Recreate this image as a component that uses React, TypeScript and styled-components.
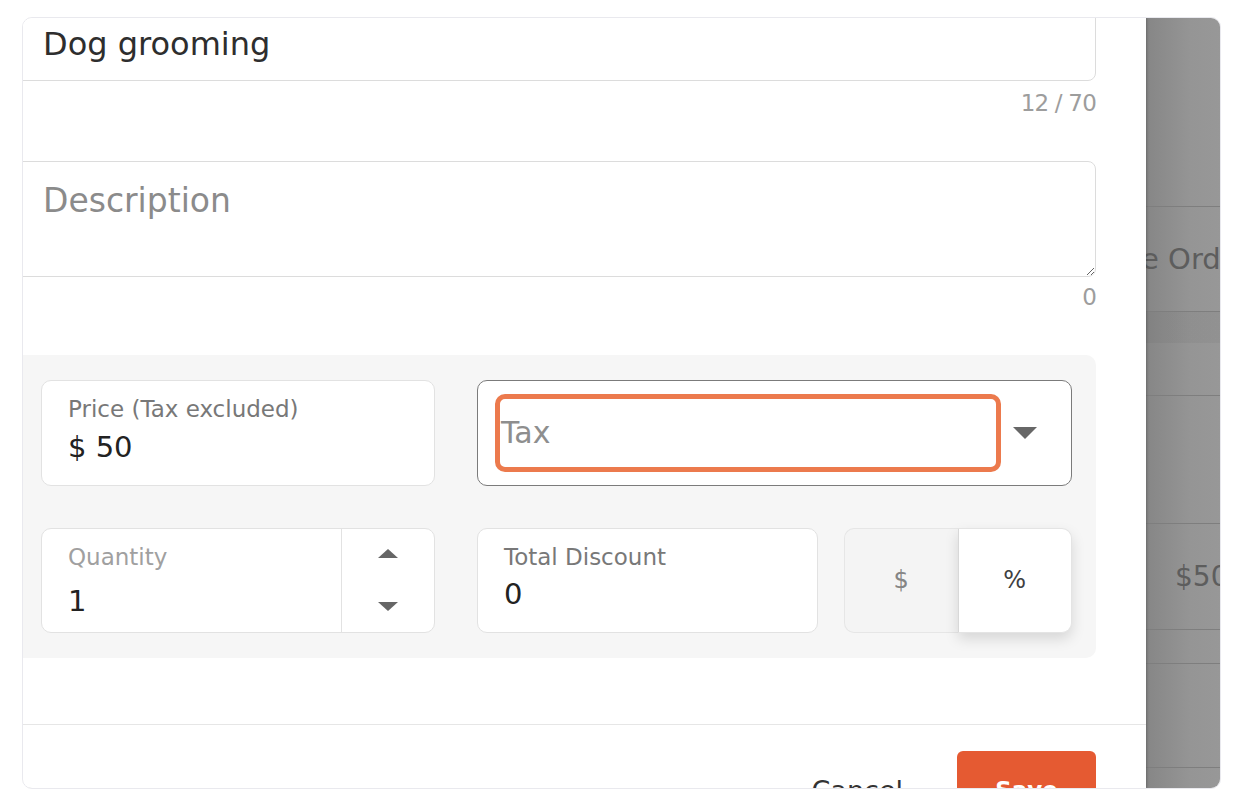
import React from "react";
import styled, { createGlobalStyle } from "styled-components";

const GlobalStyle = createGlobalStyle`
  html, body {
    margin: 0;
    padding: 0;
    background: #ffffff;
  }
  body {
    font-family: "DejaVu Sans", "Noto Sans", sans-serif;
  }
  * {
    box-sizing: border-box;
  }
`;

const Frame = styled.div`
  margin: 17px 0 0 22px;
  width: 1199px;
  height: 772px;
  border: 1.5px solid #e9e9ee;
  border-radius: 10px;
  overflow: hidden;
  display: flex;
  background: #ffffff;
`;

const Modal = styled.div`
  width: 1123px;
  flex-shrink: 0;
  display: flex;
  flex-direction: column;
  background: #ffffff;
  position: relative;
  z-index: 1;
  box-shadow: 1px 0 2px rgba(0, 0, 0, 0.22);
`;

/* content is scrolled: its top-left edge is clipped by the frame */
const Body = styled.div`
  display: flex;
  flex-direction: column;
  margin: -11.5px 50px 0 -11px;
`;

const NameInput = styled.input`
  width: 100%;
  height: 74px;
  border: 1.5px solid #dcdcdc;
  border-radius: 8px;
  padding: 0 30px;
  font-family: inherit;
  font-size: 32px;
  color: #2e2e2e;
  outline: none;
  background: #ffffff;
`;

const Counter = styled.div<{ $top: number }>`
  text-align: right;
  font-size: 23px;
  line-height: 28px;
  letter-spacing: -0.8px;
  color: #9d9d9d;
  margin: ${(p) => p.$top}px 0 44px;
`;

const DescriptionArea = styled.textarea`
  width: 100%;
  height: 116px;
  border: 1.5px solid #dcdcdc;
  border-radius: 8px;
  padding: 22px 30px;
  font-family: inherit;
  font-size: 33px;
  line-height: 33px;
  color: #2b2b2b;
  outline: none;
  display: block;
  background: #ffffff;

  &::placeholder {
    color: #8b8b8b;
  }
`;

const PriceSection = styled.div`
  background: #f6f6f6;
  border-radius: 10px;
  padding: 25px 24px 25px 29px;
  display: flex;
  flex-direction: column;
  gap: 42px;
`;

const FieldRow = styled.div<{ $gap: number }>`
  display: flex;
  gap: ${(p) => p.$gap}px;
`;

const Field = styled.div<{ $width?: number; $height: number }>`
  ${(p) => (p.$width ? `width: ${p.$width}px; flex-shrink: 0;` : "flex: 1;")}
  height: ${(p) => p.$height}px;
  background: #ffffff;
  border: 1.5px solid #e2e2e2;
  border-radius: 10px;
  display: flex;
`;

const FieldBody = styled.div`
  flex: 1;
  display: flex;
  flex-direction: column;
  gap: 7px;
  padding: 15px 26px 0;
`;

const FieldLabel = styled.div<{ $muted?: boolean }>`
  font-size: 23px;
  line-height: 26px;
  color: ${(p) => (p.$muted ? "#a0a0a0" : "#787878")};
  white-space: nowrap;
`;

const FieldValue = styled.div<{ $offset?: number }>`
  font-size: 29px;
  line-height: 34px;
  color: #222222;
  margin-top: ${(p) => p.$offset || 0}px;
`;

const Spinner = styled.div`
  width: 93px;
  border-left: 1.5px solid #e2e2e2;
  display: flex;
  flex-direction: column;
  align-items: center;
  justify-content: space-between;
  padding: 20px 0 21px;
`;

const SelectBox = styled.div`
  flex: 1;
  height: 106px;
  background: #ffffff;
  border: 1.5px solid #7b7b7b;
  border-radius: 10px;
  display: flex;
  align-items: center;
  padding: 0 34px 0 17px;
`;

const Highlight = styled.div`
  flex: 1;
  height: 78px;
  border: 5.5px solid #ec7a4d;
  border-radius: 10px;
  display: flex;
  align-items: center;
  padding-left: 1px;
  font-size: 30px;
  color: #8e8e8e;
`;

const Caret = styled.svg`
  margin-left: 12px;
  flex-shrink: 0;
`;

const DiscountGroup = styled.div`
  flex: 1;
  display: flex;
  gap: 26px;
`;

const Toggle = styled.div`
  width: 228px;
  height: 105px;
  display: flex;
`;

const ToggleOption = styled.div<{ $active?: boolean }>`
  flex: 1;
  display: flex;
  align-items: center;
  justify-content: center;
  font-size: 24px;
  border: 1.5px solid ${(p) => (p.$active ? "#e4e4e4" : "#e6e6e6")};
  ${(p) =>
    p.$active
      ? `
    background: #ffffff;
    color: #3f3f3f;
    border-radius: 0 10px 10px 0;
    border-left-color: #d8d8d8;
    box-shadow: 0 6px 14px rgba(0, 0, 0, 0.13);
  `
      : `
    background: #f4f4f4;
    color: #858585;
    border-right: none;
    border-radius: 10px 0 0 10px;
  `}
`;

const Divider = styled.div`
  height: 1.5px;
  background: #e6e6e6;
  margin-top: 66px;
  flex-shrink: 0;
`;

const Footer = styled.div`
  display: flex;
  justify-content: flex-end;
  align-items: center;
  gap: 54px;
  padding: 26px 50px 0 0;
`;

const CancelButton = styled.button`
  background: none;
  border: none;
  padding: 0;
  font-family: inherit;
  font-size: 27px;
  color: #333333;
`;

const SaveButton = styled.button`
  width: 139px;
  height: 78px;
  border: none;
  border-radius: 6px;
  background: #e55a32;
  color: #ffffff;
  font-family: inherit;
  font-size: 23px;
  font-weight: bold;
`;

const Backdrop = styled.div`
  flex: 1;
  display: flex;
  flex-direction: column;
  background: linear-gradient(90deg, #868686 0%, #959595 35%, #9c9c9c 100%);
`;

const BackdropRow = styled.div<{ $h?: number; $band?: boolean }>`
  ${(p) => (p.$h ? `height: ${p.$h}px; flex-shrink: 0;` : "flex: 1;")}
  border-bottom: ${(p) => (p.$h ? "1.5px solid #7e7e7e" : "none")};
  display: flex;
  align-items: center;
  white-space: nowrap;
  overflow: hidden;
  color: #5d5d5d;
  ${(p) =>
    p.$band
      ? "background: linear-gradient(180deg, rgba(0,0,0,0.04) 0 31px, transparent 31px);"
      : ""}
`;

const BackdropText = styled.span<{ $size: number; $indent: number }>`
  font-size: ${(p) => p.$size}px;
  margin-left: ${(p) => p.$indent}px;
`;

function Triangle({ up }: { up?: boolean }) {
  return (
    <svg width="20" height="9" viewBox="0 0 20 9">
      <polygon points={up ? "10,0 20,9 0,9" : "0,0 20,0 10,9"} fill="#666666" />
    </svg>
  );
}

export default function App() {
  return (
    <>
      <GlobalStyle />
      <Frame>
        <Modal>
          <Body>
            <NameInput defaultValue="Dog grooming" />
            <Counter $top={8}>12 / 70</Counter>
            <DescriptionArea placeholder="Description" />
            <Counter $top={6}>0</Counter>

            <PriceSection>
              <FieldRow $gap={42}>
                <Field $width={394} $height={106}>
                  <FieldBody>
                    <FieldLabel>Price (Tax excluded)</FieldLabel>
                    <FieldValue $offset={1}>$ 50</FieldValue>
                  </FieldBody>
                </Field>
                <SelectBox>
                  <Highlight>Tax</Highlight>
                  <Caret width="24" height="12" viewBox="0 0 24 12">
                    <polygon points="0,0 24,0 12,12" fill="#676767" />
                  </Caret>
                </SelectBox>
              </FieldRow>

              <FieldRow $gap={42}>
                <Field $width={394} $height={105}>
                  <FieldBody>
                    <FieldLabel $muted>Quantity</FieldLabel>
                    <FieldValue $offset={7}>1</FieldValue>
                  </FieldBody>
                  <Spinner>
                    <Triangle up />
                    <Triangle />
                  </Spinner>
                </Field>
                <DiscountGroup>
                  <Field $height={105}>
                    <FieldBody>
                      <FieldLabel>Total Discount</FieldLabel>
                      <FieldValue>0</FieldValue>
                    </FieldBody>
                  </Field>
                  <Toggle>
                    <ToggleOption>$</ToggleOption>
                    <ToggleOption $active>%</ToggleOption>
                  </Toggle>
                </DiscountGroup>
              </FieldRow>
            </PriceSection>
          </Body>

          <Divider />
          <Footer>
            <CancelButton>Cancel</CancelButton>
            <SaveButton>Save</SaveButton>
          </Footer>
        </Modal>

        <Backdrop>
          <BackdropRow $h={189} />
          <BackdropRow $h={105}>
            <BackdropText $size={29} $indent={-5}>
              e Order
            </BackdropText>
          </BackdropRow>
          <BackdropRow $h={84} $band />
          <BackdropRow $h={128} />
          <BackdropRow $h={106}>
            <BackdropText $size={28} $indent={29}>
              $50.00
            </BackdropText>
          </BackdropRow>
          <BackdropRow $h={34} />
          <BackdropRow $h={104} />
          <BackdropRow />
        </Backdrop>
      </Frame>
    </>
  );
}
